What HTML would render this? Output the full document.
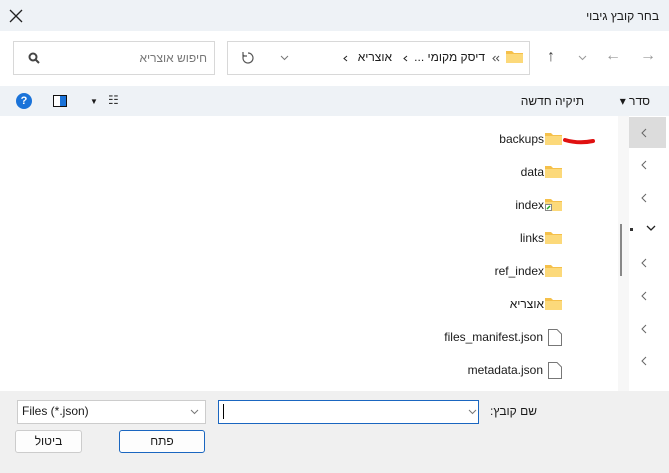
<!DOCTYPE html>
<html><head><meta charset="utf-8"><style>
*{margin:0;padding:0;box-sizing:border-box}
body{width:669px;height:473px;overflow:hidden;background:#f0f0f0;font-family:"Liberation Sans","Noto Sans CJK JP",sans-serif;font-size:12px;color:#1a1a1a;position:relative}
.a{position:absolute}
.r{position:absolute;direction:rtl;white-space:nowrap}
.fold{position:absolute;width:17px;height:13px}
.row{position:absolute;right:125px;height:20px;line-height:20px;font-size:12px;text-align:right;direction:rtl;white-space:nowrap}
.chev{position:absolute;left:641px}
</style></head><body>
<div class="a" style="left:0;top:0;width:669px;height:31px;background:#eef2f6"></div>
<div class="r" style="right:10px;top:9px">בחר קובץ גיבוי</div>
<svg class="a" style="left:9px;top:9px" width="14" height="14"><path d="M1 1L13 13M13 1L1 13" stroke="#222" stroke-width="1.3"/></svg>
<div class="a" style="left:0;top:31px;width:669px;height:55px;background:#fff"></div>
<div class="a" style="left:13px;top:41px;width:202px;height:34px;border:1px solid #d8d8d8;background:#fff"></div>
<div class="r" style="right:462px;top:51px;color:#777">חיפוש אוצריא</div>
<svg class="a" style="left:28px;top:52px" width="12" height="12"><circle cx="5" cy="5" r="3.5" stroke="#444" stroke-width="2" fill="none"/><path d="M7.5 7.5L11 11" stroke="#444" stroke-width="2"/></svg>
<div class="a" style="left:227px;top:41px;width:303px;height:34px;border:1px solid #d8d8d8;background:#fff"></div>
<svg class="a" style="left:241px;top:51px" width="14" height="14"><path d="M3 4A5 5 0 1 0 7 2" stroke="#555" fill="none" stroke-width="1.2"/><path d="M2 1V5H6" stroke="#555" fill="none" stroke-width="1.2"/></svg>
<svg class="a" style="left:280px;top:55px" width="9" height="6"><path d="M1 1L4.5 4.5L8 1" stroke="#777" fill="none"/></svg>
<svg class="a" style="left:343px;top:55px" width="5" height="7"><path d="M4 1L1 3.5L4 6" stroke="#222" fill="none"/></svg>
<div class="r" style="right:277px;top:50px">אוצריא</div>
<svg class="a" style="left:403px;top:55px" width="5" height="7"><path d="M4 1L1 3.5L4 6" stroke="#222" fill="none"/></svg>
<div class="r" style="right:184px;top:50px">דיסק מקומי ...</div>
<svg class="a" style="left:492px;top:55px" width="8" height="7"><path d="M3.5 1L1 3.5L3.5 6M7 1L4.5 3.5L7 6" stroke="#555" fill="none"/></svg>
<svg class="fold" style="left:506px;top:50px"><path d="M0 1h6l2 2h9v10H0z" fill="#f5c04a"/><rect x="0" y="4" width="17" height="9" fill="#fcd97a"/></svg>
<div class="a" style="left:547px;top:48px;color:#444;font-size:16px">↑</div>
<svg class="a" style="left:578px;top:55px" width="9" height="6"><path d="M1 1L4.5 4.5L8 1" stroke="#999" fill="none"/></svg>
<div class="a" style="left:605px;top:47px;color:#999;font-size:16px">←</div>
<div class="a" style="left:640px;top:47px;color:#999;font-size:16px">→</div>
<div class="a" style="left:0;top:86px;width:669px;height:30px;background:#eef2f6"></div>
<div class="a" style="left:16px;top:93px;width:16px;height:16px;border-radius:50%;background:#1a73d9;color:#fff;font-weight:bold;font-size:11px;text-align:center;line-height:16px">?</div>
<div class="a" style="left:53px;top:95px;width:14px;height:12px;border:1.5px solid #111;background:linear-gradient(90deg,#fff 50%,#1a73d9 50%)"></div>
<div class="a" style="left:90px;top:97px;font-size:8px">▼</div>
<div class="a" style="left:108px;top:93px;font-size:12px;color:#333">☷</div>
<div class="r" style="right:85px;top:94px">תיקיה חדשה</div>
<div class="r" style="right:19px;top:94px">סדר ▾</div>
<div class="a" style="left:0;top:116px;width:669px;height:275px;background:#fff"></div>
<div class="a" style="left:618px;top:116px;width:11px;height:275px;background:#f7f7f7"></div>
<div class="a" style="left:620px;top:224px;width:2px;height:52px;background:#888"></div>
<div class="a" style="left:629px;top:117px;width:37px;height:31px;background:#dcdcdc"></div>
<svg class="chev" style="top:128px" width="6" height="10"><path d="M5 1L1 5L5 9" stroke="#666" fill="none"/></svg>
<svg class="chev" style="top:160px" width="6" height="10"><path d="M5 1L1 5L5 9" stroke="#666" fill="none"/></svg>
<svg class="chev" style="top:193px" width="6" height="10"><path d="M5 1L1 5L5 9" stroke="#666" fill="none"/></svg>
<svg class="a" style="left:646px;top:225px" width="10" height="6"><path d="M1 1L5 5L9 1" stroke="#222" fill="none" stroke-width="1.3"/></svg>
<div class="a" style="left:630px;top:228px;width:3px;height:3px;background:#333"></div>
<svg class="chev" style="top:258px" width="6" height="10"><path d="M5 1L1 5L5 9" stroke="#666" fill="none"/></svg>
<svg class="chev" style="top:291px" width="6" height="10"><path d="M5 1L1 5L5 9" stroke="#666" fill="none"/></svg>
<svg class="chev" style="top:324px" width="6" height="10"><path d="M5 1L1 5L5 9" stroke="#666" fill="none"/></svg>
<svg class="chev" style="top:356px" width="6" height="10"><path d="M5 1L1 5L5 9" stroke="#666" fill="none"/></svg>
<div class="row" style="top:129px">backups</div>
<div class="row" style="top:162px">data</div>
<div class="row" style="top:195px">index</div>
<div class="row" style="top:228px">links</div>
<div class="row" style="top:261px">ref_index</div>
<div class="row" style="top:294px">אוצריא</div>
<div class="row" style="top:327px;right:126px">files_manifest.json</div>
<div class="row" style="top:360px;right:126px">metadata.json</div>
<svg class="fold" style="left:545px;top:132px"><path d="M0 1h6l2 2h9v10H0z" fill="#f5c04a"/><rect x="0" y="4" width="17" height="9" fill="#fcd97a"/></svg>
<svg class="a" style="left:563px;top:137px" width="32" height="8"><path d="M2 3Q16 7 30 4" stroke="#e01010" stroke-width="4" fill="none" stroke-linecap="round"/></svg>
<svg class="fold" style="left:545px;top:165px"><path d="M0 1h6l2 2h9v10H0z" fill="#f5c04a"/><rect x="0" y="4" width="17" height="9" fill="#fcd97a"/></svg>
<svg class="fold" style="left:545px;top:198px"><path d="M0 1h6l2 2h9v10H0z" fill="#f5c04a"/><rect x="0" y="4" width="17" height="9" fill="#fcd97a"/><rect x="0.5" y="6.5" width="6" height="6" fill="#fff" stroke="#888"/><path d="M2 11L5 8" stroke="#2a2" stroke-width="1.5"/></svg>
<svg class="fold" style="left:545px;top:231px"><path d="M0 1h6l2 2h9v10H0z" fill="#f5c04a"/><rect x="0" y="4" width="17" height="9" fill="#fcd97a"/></svg>
<svg class="fold" style="left:545px;top:264px"><path d="M0 1h6l2 2h9v10H0z" fill="#f5c04a"/><rect x="0" y="4" width="17" height="9" fill="#fcd97a"/></svg>
<svg class="fold" style="left:545px;top:297px"><path d="M0 1h6l2 2h9v10H0z" fill="#f5c04a"/><rect x="0" y="4" width="17" height="9" fill="#fcd97a"/></svg>
<svg class="a" style="left:548px;top:329px" width="14" height="17"><path d="M.5 .5H9L13.5 5V16.5H.5Z" fill="#fff" stroke="#777"/></svg>
<svg class="a" style="left:548px;top:362px" width="14" height="17"><path d="M.5 .5H9L13.5 5V16.5H.5Z" fill="#fff" stroke="#777"/></svg>
<div class="a" style="left:17px;top:400px;width:189px;height:24px;border:1px solid #ccc;background:#fff;padding:3px 0 0 4px">Files (*.json)</div>
<svg class="a" style="left:190px;top:409px" width="9" height="6"><path d="M1 1L4.5 4.5L8 1" stroke="#777" fill="none"/></svg>
<div class="a" style="left:218px;top:400px;width:261px;height:24px;border:1px solid #1a66c0;background:#fff"></div>
<div class="a" style="left:223px;top:404px;width:1px;height:15px;background:#000"></div>
<svg class="a" style="left:468px;top:409px" width="9" height="6"><path d="M1 1L4.5 4.5L8 1" stroke="#777" fill="none"/></svg>
<div class="r" style="right:132px;top:404px">שם קובץ:</div>
<div class="a" style="left:15px;top:430px;width:67px;height:23px;border:1px solid #ccc;border-radius:3px;background:#fdfdfd;text-align:center;line-height:21px">ביטול</div>
<div class="a" style="left:119px;top:430px;width:86px;height:23px;border:1px solid #1a66c0;border-radius:3px;background:#fdfdfd;text-align:center;line-height:21px">פתח</div>
</body></html>
